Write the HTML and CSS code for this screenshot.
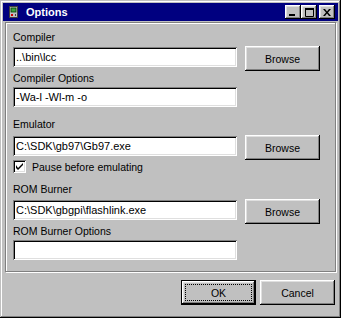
FILE: index.html
```html
<!DOCTYPE html>
<html lang="en">
<head>
	<meta charset="UTF-8">
	<title>Options</title>
	<link rel="stylesheet" href="styles.css">
</head>
<body>

<div class="window">
	<div class="titlebar">
		<svg class="app-icon" width="9" height="12" viewBox="0 0 9 12">
			<rect x="0.5" y="0.5" width="8" height="11" fill="#c0c0c0" stroke="#404040"/>
			<rect x="2" y="2" width="5" height="4" fill="#40a040" stroke="#004000" stroke-width="0.8"/>
			<rect x="2" y="8" width="2" height="2" fill="#d00000"/>
			<rect x="6" y="8" width="1" height="2" fill="#404040"/>
		</svg>
		<span class="title">Options</span>
		<div class="caption-buttons">
			<button class="cap-btn">
				<svg width="8" height="7" viewBox="0 0 8 7"><rect x="0" y="5" width="6" height="2" fill="#000"/></svg>
			</button>
			<button class="cap-btn">
				<svg width="9" height="9" viewBox="0 0 9 9"><path d="M0.5 0.5h8v8h-8z" fill="none" stroke="#000"/><rect x="0" y="0" width="9" height="2" fill="#000"/></svg>
			</button>
			<button class="cap-btn close-btn">
				<svg width="8" height="7" viewBox="0 0 8 7"><path d="M0 0h2l2 2.5 2-2.5h2l-3 3.5 3 3.5h-2l-2-2.5-2 2.5h-2l3-3.5z" fill="#000"/></svg>
			</button>
		</div>
	</div>

	<div class="panel">
		<div class="field-label">Compiler</div>
		<div class="row">
			<input class="textbox" type="text" value="..\bin\lcc">
			<button class="btn browse-btn">Browse</button>
		</div>

		<div class="field-label near">Compiler Options</div>
		<div class="row">
			<input class="textbox" type="text" value="-Wa-l -Wl-m -o">
		</div>

		<div class="field-label far">Emulator</div>
		<div class="row">
			<input class="textbox" type="text" value="C:\SDK\gb97\Gb97.exe">
			<button class="btn browse-btn">Browse</button>
		</div>
		<div class="check-row">
			<span class="checkbox">
				<svg width="7" height="7" viewBox="0 0 7 7"><path d="M0 2v3l2 2 5-5v-2l-5 5z" fill="#000"/></svg>
			</span>
			<span>Pause before emulating</span>
		</div>

		<div class="field-label after-check">ROM Burner</div>
		<div class="row">
			<input class="textbox" type="text" value="C:\SDK\gbgpi\flashlink.exe">
			<button class="btn browse-btn">Browse</button>
		</div>

		<div class="field-label near">ROM Burner Options</div>
		<div class="row">
			<input class="textbox" type="text" value="">
		</div>
	</div>

	<div class="footer">
		<button class="btn default-btn"><span class="focus-ring">OK</span></button>
		<button class="btn">Cancel</button>
	</div>
</div>

</body>
</html>
```

FILE: styles.css
```css
* {
	box-sizing: border-box;
}
body {
	margin: 0;
	font-family: "Liberation Sans", Arial, sans-serif;
	font-size: 10.5px;
	background-color: #c0c0c0;
}
.window {
	width: 341px;
	height: 318px;
	padding: 3px;
	background-color: #c0c0c0;
	box-shadow: inset -1px -1px #000, inset 1px 1px #c0c0c0, inset -2px -2px #808080, inset 2px 2px #fff;
}
.titlebar {
	display: flex;
	align-items: center;
	height: 18px;
	padding: 0 3px 0 6px;
	background-color: #000080;
}
.app-icon {
	display: block;
}
.title {
	margin-left: 8px;
	color: #fff;
	font-weight: bold;
	font-size: 11px;
}
.caption-buttons {
	display: flex;
	margin-left: auto;
}
.cap-btn {
	display: flex;
	align-items: center;
	justify-content: center;
	width: 16px;
	height: 14px;
	padding: 0;
	border: none;
	background-color: #c0c0c0;
	box-shadow: inset -1px -1px #000, inset 1px 1px #fff, inset -2px -2px #808080, inset 2px 2px #dfdfdf;
}
.close-btn {
	margin-left: 2px;
}
.panel {
	margin: 1px 2px 0;
	padding: 8px 0 11px 7px;
	border: 1px solid #808080;
	box-shadow: 1px 1px 0 #fff, inset 1px 1px 0 #fff;
}
.field-label {
	height: 13px;
	line-height: 13px;
	margin-bottom: 3px;
	color: #000;
}
.field-label.near {
	margin-top: 5px;
	margin-bottom: 2px;
}
.field-label.far {
	margin-top: 11px;
	margin-bottom: 5px;
}
.field-label.after-check {
	margin-top: 10px;
	margin-bottom: 4px;
}
.row {
	display: flex;
	align-items: flex-start;
	gap: 8px;
	height: 20px;
}
.textbox {
	width: 224px;
	height: 20px;
	padding: 0 2px 0 3px;
	border: none;
	outline: none;
	background-color: #fff;
	font-family: inherit;
	font-size: 11px;
	color: #000;
	box-shadow: inset 1px 1px #808080, inset -1px -1px #fff, inset 2px 2px #000, inset -2px -2px #dfdfdf;
}
.btn {
	width: 75px;
	height: 25px;
	padding: 0;
	border: none;
	background-color: #c0c0c0;
	font-family: inherit;
	font-size: 10.5px;
	color: #000;
	box-shadow: inset -1px -1px #000, inset 1px 1px #fff, inset -2px -2px #808080, inset 2px 2px #dfdfdf;
}
.browse-btn {
	margin-top: -1px;
}
.check-row {
	display: flex;
	align-items: center;
	gap: 6px;
	height: 13px;
	margin-top: 4px;
}
.checkbox {
	display: flex;
	align-items: center;
	justify-content: center;
	width: 13px;
	height: 13px;
	background-color: #fff;
	box-shadow: inset 1px 1px #808080, inset -1px -1px #fff, inset 2px 2px #000, inset -2px -2px #dfdfdf;
}
.footer {
	display: flex;
	justify-content: flex-end;
	gap: 4px;
	margin-top: 8px;
	padding-right: 3px;
}
.default-btn {
	padding: 4px;
	box-shadow: inset 0 0 0 1px #000, inset -2px -2px #000, inset 2px 2px #fff, inset -3px -3px #808080, inset 3px 3px #dfdfdf;
}
.focus-ring {
	display: flex;
	align-items: center;
	justify-content: center;
	width: 100%;
	height: 100%;
	border: 1px dotted #000;
}
```
